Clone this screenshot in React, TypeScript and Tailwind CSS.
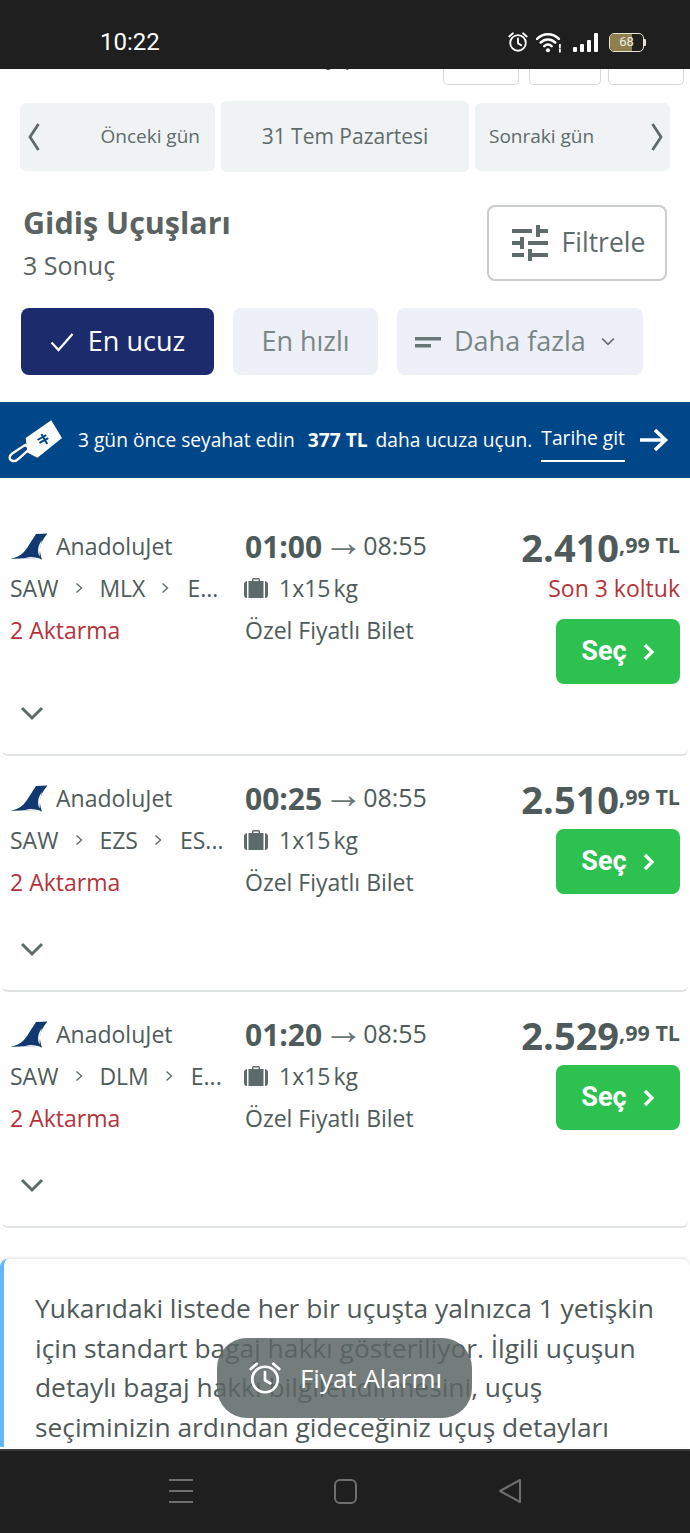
import React from "react";

const Tune = () => (
  <svg viewBox="3 3 18 18" className="w-[36px] h-[36px]" fill="#5f6b6b">
    <path d="M3 17v2h6v-2H3zM3 5v2h10V5H3zm10 16v-2h8v-2h-8v-2h-2v6h2zM7 9v2H3v2h4v2h2V9H7zm14 4v-2H11v2h10zm-6-4h2V7h4V5h-4V3h-2v6z" />
  </svg>
);

const Logo = () => (
  <svg viewBox="0 0 38 27" className="w-[38px] h-[27px] shrink-0">
    <path d="M0 26 C9 24 13 21 17 15 L26 1 L37.500 0.500 C32 7 29.500 13 30 18 C30.300 21 31 24 32 26.500 C25 24.500 14 25 0 26Z" fill="#11386f" />
    <path d="M32 7 C28 12 27 18 29.500 23.500 C29.800 18 30.500 12 32 7Z" fill="#ffffff" />
    <path d="M15 24.500 C20 23.500 25 23.800 30 25.500 L31 27 C25 25.500 20 25 15 24.500Z" fill="#ffffff" />
  </svg>
);

const Bag = () => (
  <svg viewBox="0 0 24 20" className="w-[24px] h-[20px] shrink-0" fill="#5f6b6b">
    <path d="M8 3V1.500A1.500 1.500 0 0 1 9.500 0h5A1.500 1.500 0 0 1 16 1.500V3h-1.500V1.500h-5V3z" />
    <path d="M4.500 3h15v17h-15zM3 3.200V20C1.300 20 0 18.800 0 17V6c0-1.600 1.300-2.800 3-2.800zM21 3.200c1.700 0 3 1.200 3 2.800v11c0 1.800-1.300 3-3 3z" />
  </svg>
);

const Chev = ({ dir, size = 12, sw = 1.400 }: { dir: "r" | "d"; size?: number; sw?: number }) => (
  <svg viewBox="0 0 12 12" width={size} height={size} fill="none" stroke="#5f6b6b" strokeWidth={sw}>
    {dir === "r" ? <path d="M3.500 1.500 8.500 6 3.500 10.500" /> : <path d="M1 3 6 8 11 3" />}
  </svg>
);

const AlarmIcon = ({ size, sw }: { size: number; sw: number }) => (
  <svg viewBox="0 0 24 24" width={size} height={size} fill="none" stroke="#fff" strokeWidth={sw} strokeLinecap="round" strokeLinejoin="round">
    <circle cx="12" cy="13" r="8.500" />
    <path d="M12 8v5.500l3.500 2M2.500 6 6.500 2.500M21.500 6l-4-3.500" />
  </svg>
);

type Flight = { dep: string; mid: string; last: string; price: string; seats?: boolean };
const flights: Flight[] = [
  { dep: "01:00", mid: "MLX", last: "E...", price: "2.410", seats: true },
  { dep: "00:25", mid: "EZS", last: "ES...", price: "2.510" },
  { dep: "01:20", mid: "DLM", last: "E...", price: "2.529" },
];

const FlightCard = ({ f }: { f: Flight }) => (
  <div className={`mx-[2px] rounded-[6px] border-b-2 border-[#dfe2e2] flex flex-col pl-[8px] pr-[8px] ${f.seats ? "h-[252px]" : "h-[236px]"}`}>
    <div className="flex pt-[21px]">
      <div className="w-[235px] shrink-0 flex flex-col">
        <div className="h-[42px] flex items-center gap-[8px] text-[23px]">
          <Logo />
          <span>AnadoluJet</span>
        </div>
        <div className="h-[42px] flex items-center text-[23px]">
          <span>SAW</span>
          <span className="ml-[15px] mr-[14px]"><Chev dir="r" /></span>
          <span>{f.mid}</span>
          <span className="ml-[14px] mr-[16px]"><Chev dir="r" /></span>
          <span>{f.last}</span>
        </div>
        <div className="h-[42px] flex items-center text-[23px] text-[#b5333a]">2 Aktarma</div>
      </div>
      <div className="w-[255px] shrink-0 flex flex-col">
        <div className="h-[42px] flex items-center text-[25px]">
          <span className="font-bold text-[30px]">{f.dep}</span>
          <span className="ml-[1px] text-[40px] leading-[40px] -mt-[11px] text-[#6a7474]">→</span>
          <span>08:55</span>
        </div>
        <div className="h-[42px] flex items-center text-[23px] -ml-[1px]">
          <Bag />
          <span className="ml-[11px] [word-spacing:-3px]">1x15 kg</span>
        </div>
        <div className="h-[42px] flex items-center text-[23px]">Özel Fiyatlı Bilet</div>
      </div>
      <div className="flex-1 flex flex-col items-end min-w-0">
        <div className="h-[42px] flex items-center whitespace-nowrap font-bold mt-[1px] -mb-[1px]">
          <span className="text-[38px]">{f.price}</span>
          <span className="text-[21.500px] -mt-[3px]">,99 TL</span>
        </div>
        {f.seats && <div className="h-[42px] flex items-center text-[23px] text-[#b5333a] whitespace-nowrap">Son 3 koltuk</div>}
        <div className="w-[124px] h-[65px] mt-[10px] rounded-[8px] bg-[#2dc24f] flex items-center justify-center gap-[16px] font-['Roboto',sans-serif] font-bold text-[27px] text-white">
          <span>Seç</span>
          <svg viewBox="0 0 12 18" width="12" height="18" fill="none" stroke="#fff" strokeWidth="3.200"><path d="M2 2l7 7-7 7" /></svg>
        </div>
      </div>
    </div>
    <div className="mt-auto mb-[28px] pl-[10px]">
      <Chev dir="d" size={24} sw={1.500} />
    </div>
  </div>
);

export default function App() {
  return (
    <div className="relative w-[690px] h-[1533px] overflow-hidden flex flex-col bg-white text-[#4f5b5b] font-['Open_Sans',sans-serif]">
      <div className="h-[69px] shrink-0 bg-[#1f1f1f] flex items-center justify-between pl-[100px] pr-[44px] pt-[15px] text-white">
        <span className="font-['Roboto',sans-serif] text-[24px]">10:22</span>
        <div className="flex items-center">
          <AlarmIcon size={22} sw={2} />
          <svg viewBox="0 0 26 20" width="27" height="21" className="ml-[7px]" fill="none" stroke="#fff" strokeWidth="2.400" strokeLinecap="round">
            <path d="M1 6.500C7 .500 16 .500 22 6.500M4.500 10c4-4 10-4 14 0M8 13.500c2-2 5-2 7 0" />
            <circle cx="11.500" cy="17.500" r="2" fill="#fff" stroke="none" />
            <path d="M23 12v2.500M23 16.500V19" strokeWidth="1.800" />
          </svg>
          <div className="ml-[10px] flex items-end gap-[3px] h-[20px]">
            <div className="w-[4px] h-[5px] bg-white rounded-[1px]" />
            <div className="w-[4px] h-[8px] bg-white rounded-[1px]" />
            <div className="w-[4px] h-[12px] bg-white rounded-[1px]" />
            <div className="w-[4px] h-[19px] bg-white rounded-[1px]" />
          </div>
          <div className="ml-[11px] flex items-center">
            <div className="w-[35px] h-[19px] rounded-[5px] border-[1.500px] border-[#e8e4d4] overflow-hidden flex bg-[#1f1f1f] relative">
              <div className="w-[22px] bg-[#8f7f4f]" />
              <span className="absolute inset-0 flex items-center justify-center text-[13px] text-[#f0eee0] font-['Roboto',sans-serif]">68</span>
            </div>
            <div className="w-[2px] h-[7px] bg-[#e8e4d4] rounded-r-[1px]" />
          </div>
        </div>
      </div>

      <div className="flex-1 min-h-0 overflow-hidden flex flex-col">
        <div className="h-[16px] shrink-0 flex overflow-hidden">
          <span className="ml-[326px] -mt-[26px] text-[24px] leading-[24px]">y p</span>
          <div className="flex-1" />
          <div className="flex gap-[10px] pr-[6px] items-end h-[16px]">
            <div className="w-[76px] h-[16px] border border-t-0 border-[#d5d9d9] rounded-b-[5px]" />
            <div className="w-[72px] h-[16px] border border-t-0 border-[#d5d9d9] rounded-b-[5px]" />
            <div className="w-[76px] h-[16px] border border-t-0 border-[#d5d9d9] rounded-b-[5px] -ml-[3px]" />
          </div>
        </div>

        <div className="flex items-center gap-[6px] px-[20px] mt-[16px] shrink-0 text-[#5f6b6b]">
          <div className="w-[195px] h-[68px] rounded-[6px] bg-[#eff3f3] flex items-center pl-[8px] pr-[15px] justify-between text-[19px]">
            <svg viewBox="0 0 12 28" width="12" height="28" fill="none" stroke="#5f6b6b" strokeWidth="2.800"><path d="M10.500 1 2 14l8.500 13" /></svg>
            <span>Önceki gün</span>
          </div>
          <div className="w-[248px] h-[71px] rounded-[6px] bg-[#eff3f3] flex items-center justify-center text-[21px]">31 Tem Pazartesi</div>
          <div className="w-[195px] h-[68px] rounded-[6px] bg-[#eff3f3] flex items-center pl-[14px] pr-[7px] justify-between text-[19px]">
            <span>Sonraki gün</span>
            <svg viewBox="0 0 12 28" width="12" height="28" fill="none" stroke="#5f6b6b" strokeWidth="2.800"><path d="M1.500 1 10 14 1.500 27" /></svg>
          </div>
        </div>

        <div className="h-[76px] flex items-start justify-between pl-[23px] pr-[23px] mt-[33px] shrink-0">
          <div className="flex flex-col text-[#5a6262] -mt-[4px]">
            <span className="font-bold text-[30.500px] leading-[42px]">Gidiş Uçuşları</span>
            <span className="text-[25px] leading-[38px] mt-[3px]">3 Sonuç</span>
          </div>
          <div className="w-[180px] h-[76px] rounded-[8px] border-2 border-[#c9cdcd] flex items-center justify-center gap-[14px] pl-[3px] text-[26.500px] text-[#5f6b6b]">
            <Tune />
            <span>Filtrele</span>
          </div>
        </div>

        <div className="flex items-center gap-[19px] pl-[21px] mt-[27px] shrink-0 text-[27px]">
          <div className="w-[193px] h-[67px] rounded-[8px] bg-[#1c2b6b] text-white flex items-center justify-center gap-[14px]">
            <svg viewBox="0 0 24 20" width="24" height="20" fill="none" stroke="#fff" strokeWidth="2.200"><path d="M1.500 10.500 8.500 18 22.500 2" /></svg>
            <span>En ucuz</span>
          </div>
          <div className="w-[145px] h-[67px] rounded-[8px] bg-[#edf0f6] text-[#7b8686] flex items-center justify-center">En hızlı</div>
          <div className="w-[246px] h-[67px] rounded-[8px] bg-[#edf0f6] text-[#7b8686] flex items-center pl-[18px] gap-[13px]">
            <svg viewBox="0 0 26 12" width="26" height="12" fill="#6b7676"><rect x="0" y="1" width="26" height="3.500" /><rect x="0" y="8" width="16" height="3.500" /></svg>
            <span>Daha fazla</span>
            <span className="ml-[2px]"><Chev dir="d" size={14} /></span>
          </div>
        </div>

        <div className="h-[76px] mt-[27px] shrink-0 bg-[#00478a] flex items-center pl-[8px] text-white text-[19.200px] whitespace-nowrap">
          <svg viewBox="0 0 56 46" width="55" height="46" className="shrink-0">
            <path d="M18 21 44 3 55 21 30 41 20 36z" fill="#fff" />
            <path d="M16 29 4 37c-3 2-3 6 0 7 2 1 5 0 7-2l11-10-4-4z" fill="none" stroke="#fff" strokeWidth="2.400" />
            <path d="M34 17l6 10M30 23l9-5M32 26l9-5" stroke="#00478a" strokeWidth="2" fill="none" />
          </svg>
          <span className="ml-[15px]">3 gün önce seyahat edin</span>
          <span className="ml-[13px] font-bold">377 TL</span>
          <span className="ml-[8px]">daha ucuza uçun.</span>
          <span className="ml-[9px] border-b-2 border-white h-[44px] leading-[40px]">Tarihe git</span>
          <svg viewBox="0 0 28 24" width="28" height="24" className="ml-[15px]" fill="none" stroke="#fff" strokeWidth="3.600"><path d="M0 12h25M15 2l10.500 10L15 22" /></svg>
        </div>

        <div className="mt-[26px] shrink-0 flex flex-col">
          {flights.map((f) => <FlightCard key={f.dep} f={f} />)}
        </div>

        <div className="relative mt-[31px] shrink-0 rounded-t-[8px] border-l-[4px] border-[#65b5fb] shadow-[0_-1px_3px_rgba(0,0,0,0.12)] pl-[31px] pr-[30px] pt-[30px] text-[26.350px] leading-[39.500px] text-[#4f5959]">
          Yukarıdaki listede her bir uçuşta yalnızca 1 yetişkin için standart bagaj hakkı gösteriliyor. İlgili uçuşun detaylı bagaj hakkı bilgilendirmesini, uçuş seçiminizin ardından gideceğiniz uçuş detayları
        </div>
      </div>

      <div className="h-[84px] shrink-0 bg-[#1f1f1f] border-t-2 border-[#3a3a3a] flex items-center justify-center gap-[141px] pb-[2px]">
        <div className="w-[24px] h-[24px] flex flex-col justify-between">
          <div className="h-[2px] bg-[#6f6f6f]" />
          <div className="h-[2px] bg-[#6f6f6f]" />
          <div className="h-[2px] bg-[#6f6f6f]" />
        </div>
        <div className="w-[23px] h-[25px] rounded-[6px] border-2 border-[#6f6f6f]" />
        <svg viewBox="0 0 24 26" width="24" height="26" fill="none" stroke="#6f6f6f" strokeWidth="2" strokeLinejoin="round"><path d="M22 2v22L2 13z" /></svg>
      </div>

      <div className="absolute left-[217px] top-[1338px] w-[255px] h-[80px] rounded-[30px] bg-[#5c6664]/85 flex items-center justify-center gap-[17px] text-white text-[26px]">
        <AlarmIcon size={36} sw={1.800} />
        <span>Fiyat Alarmı</span>
      </div>
    </div>
  );
}
